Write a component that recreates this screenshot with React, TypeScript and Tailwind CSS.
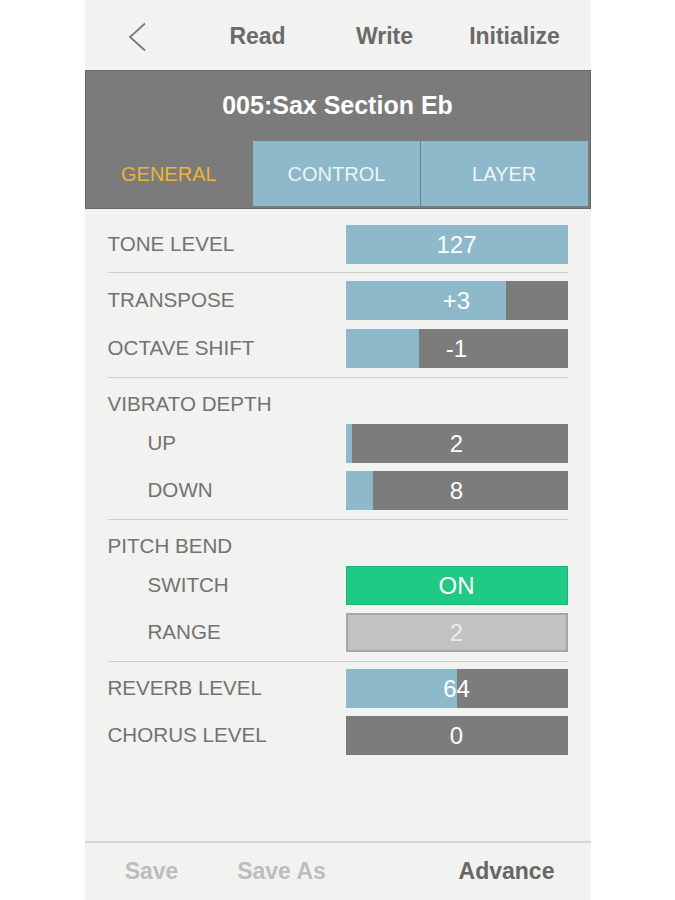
import React from "react";

type BarProps = { value: string; fill: number; kind?: "normal" | "on" | "disabled" };

function Bar({ value, fill, kind = "normal" }: BarProps) {
  if (kind === "on") {
    return (
      <div className="w-[222px] h-[39px] bg-[#20c986] border border-[#1db57a] flex items-center justify-center text-white text-[24px]">
        {value}
      </div>
    );
  }
  if (kind === "disabled") {
    return (
      <div className="w-[222px] h-[39px] bg-[#c2c2c2] border-2 border-[#a6a6a6] flex items-center justify-center text-[#ececec] text-[24px]">
        {value}
      </div>
    );
  }
  return (
    <div className="relative w-[222px] h-[39px] bg-[#7c7c7c] flex items-center justify-center text-white text-[24px] overflow-hidden">
      <div className="absolute left-0 top-0 bottom-0 bg-[#8db9cb]" style={{ width: `${fill}px` }} />
      <span className="relative">{value}</span>
    </div>
  );
}

function Row({ label, indent, children }: { label: string; indent?: boolean; children?: React.ReactNode }) {
  return (
    <div className={`h-[39px] flex items-center justify-between pr-[23px] ${indent ? "pl-[63px]" : "pl-[23px]"}`}>
      <span className="text-[20.6px] text-[#727272]">{label}</span>
      {children}
    </div>
  );
}

function Divider() {
  return <div className="mx-[23px] h-[1px] bg-[#cfcfcf]" />;
}

export default function App() {
  return (
    <div className="w-full h-[900px] bg-white flex justify-center" style={{ fontFamily: '"Liberation Sans", Arial, sans-serif' }}>
      <div className="w-[506px] h-[900px] bg-[#f2f2f0] flex flex-col">
        {/* top nav */}
        <div className="h-[70px] pt-[3px] flex items-center text-[23px] font-bold text-[#6a6a6a]">
          <div className="w-[120px] pl-[43px] flex items-center">
            <svg width="19" height="30" viewBox="0 0 19 30" fill="none">
              <polyline points="17,1.5 2,15 17,28.5" stroke="#7a7a7a" strokeWidth="1.8" />
            </svg>
          </div>
          <div className="w-[106px] text-center">Read</div>
          <div className="w-[21px]" />
          <div className="w-[106px] text-center">Write</div>
          <div className="w-[17px]" />
          <div className="w-[120px] text-center">Initialize</div>
        </div>

        {/* title + tabs */}
        <div className="h-[139px] bg-[#7b7b7b] border border-[#686868] flex flex-col">
          <div className="h-[70px] flex items-center justify-center text-white font-bold text-[25px]">
            005:Sax Section Eb
          </div>
          <div className="flex-1 grid grid-cols-3 gap-[1px] pr-[2px] pb-[2px]">
            <div className="flex items-center justify-center text-[20px] text-[#ebb536]">GENERAL</div>
            <div className="bg-[#8db9cb] flex items-center justify-center text-[20px] text-[#eef4f6]">CONTROL</div>
            <div className="bg-[#8db9cb] flex items-center justify-center text-[20px] text-[#eef4f6]">LAYER</div>
          </div>
        </div>

        {/* group 1 */}
        <div className="pt-[16px] pb-[8px]">
          <Row label="TONE LEVEL">
            <Bar value="127" fill={222} />
          </Row>
        </div>
        <Divider />
        {/* group 2 */}
        <div className="pt-[8px] pb-[9px] flex flex-col gap-[9px]">
          <Row label="TRANSPOSE">
            <Bar value="+3" fill={160} />
          </Row>
          <Row label="OCTAVE SHIFT">
            <Bar value="-1" fill={73} />
          </Row>
        </div>
        <Divider />
        {/* group 3 */}
        <div className="pt-[7px] pb-[9px] flex flex-col">
          <Row label="VIBRATO DEPTH" />
          <Row label="UP" indent>
            <Bar value="2" fill={6} />
          </Row>
          <div className="h-[8px]" />
          <Row label="DOWN" indent>
            <Bar value="8" fill={27} />
          </Row>
        </div>
        <Divider />
        {/* group 4 */}
        <div className="pt-[7px] pb-[9px] flex flex-col">
          <Row label="PITCH BEND" />
          <Row label="SWITCH" indent>
            <Bar value="ON" fill={0} kind="on" />
          </Row>
          <div className="h-[8px]" />
          <Row label="RANGE" indent>
            <Bar value="2" fill={0} kind="disabled" />
          </Row>
        </div>
        <Divider />
        {/* group 5 */}
        <div className="pt-[7px] flex flex-col gap-[8px]">
          <Row label="REVERB LEVEL">
            <Bar value="64" fill={111} />
          </Row>
          <Row label="CHORUS LEVEL">
            <Bar value="0" fill={0} />
          </Row>
        </div>

        <div className="flex-1" />

        {/* footer */}
        <div className="h-[2px] bg-[#d6d6d6]" />
        <div className="h-[57px] flex items-center text-[23px] font-bold">
          <div className="w-[134px] text-center text-[#bdbdbd]">Save</div>
          <div className="w-[126px] text-center text-[#bdbdbd]">Save As</div>
          <div className="flex-1" />
          <div className="w-[140px] text-center text-[#666666]">Advance</div>
          <div className="w-[14px]" />
        </div>
      </div>
    </div>
  );
}
